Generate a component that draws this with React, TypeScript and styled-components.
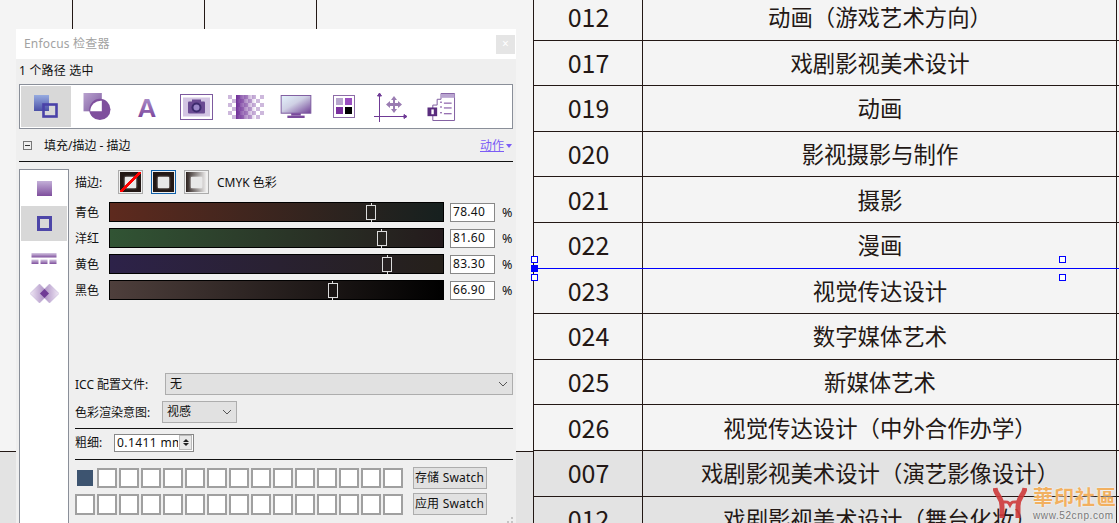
import React, { FC } from 'react';
import styled, { createGlobalStyle } from 'styled-components';

const INK = '#231815';
const UI_FONT = '"Noto Sans", "Noto Sans CJK SC", sans-serif';

const GlobalStyle = createGlobalStyle`
    html, body {
        margin: 0;
        padding: 0;
        background: #f4f4f4;
    }
    * {
        box-sizing: border-box;
    }
`;

const Page = styled.div`
    position: relative;
    display: grid;
    grid-template-columns: 533px 1fr;
    grid-template-rows: 523px;
    width: 1119px;
    height: 523px;
    overflow: hidden;
    background: #f4f4f4;
    color: ${INK};
`;

const DocLeft = styled.div`
    display: flex;
    flex-direction: column;
    justify-content: space-between;
`;

const Ticks = styled.div`
    display: flex;
    height: 29px;
`;

const Tick = styled.div<{ $w: number }>`
    width: ${(p) => p.$w}px;
    border-right: 1px solid ${INK};
`;

const Band = styled.div`
    height: 72px;
    background: #e3e3e3;
    border-top: 1px solid ${INK};
`;

const Table = styled.div`
    margin-top: -5px;
    font-family: 'Noto Sans CJK SC', sans-serif;
`;

const Row = styled.div`
    display: grid;
    grid-template-columns: 109px 474px 1fr;
    height: 45.6px;
    border-bottom: 1px solid ${INK};
`;

const Cell = styled.div<{ $shaded?: boolean; $size: number }>`
    display: flex;
    align-items: center;
    justify-content: center;
    padding: 0 0 2px 1px;
    border-left: 1px solid ${INK};
    background: ${(p) => (p.$shaded ? '#e3e3e3' : 'transparent')};
    font-size: ${(p) => p.$size}px;
    white-space: nowrap;
`;

const Stub = styled.div`
    border-left: 1px solid ${INK};
`;

const Guide = styled.div`
    position: absolute;
    left: 533px;
    right: 0;
    top: 268px;
    height: 1px;
    background: #0000ff;
`;

const Handle = styled.div<{ $x: number; $y: number; $solid?: boolean }>`
    position: absolute;
    left: ${(p) => p.$x}px;
    top: ${(p) => p.$y}px;
    width: 7px;
    height: 7px;
    border: 1px solid #0000ff;
    background: ${(p) => (p.$solid ? '#0000ff' : '#ffffff')};
`;

const Mark = styled.div`
    position: absolute;
    left: 993px;
    top: 486px;
    display: flex;
    gap: 6px;
`;

const MarkText = styled.div`
    display: flex;
    flex-direction: column;
`;

const MarkTitle = styled.div`
    font-family: 'Noto Sans CJK TC', sans-serif;
    font-weight: 700;
    font-size: 20px;
    line-height: 22px;
    letter-spacing: 1px;
    color: #f2b060;
    text-shadow: 0 0 2px #fff;
    white-space: nowrap;
`;

const MarkUrl = styled.div`
    font-family: 'Liberation Sans', sans-serif;
    font-size: 10px;
    line-height: 12px;
    letter-spacing: 0.6px;
    margin-top: 2px;
    color: #777;
    text-shadow: 0 0 2px #fff;
`;

const Panel = styled.div`
    position: absolute;
    left: 16px;
    top: 29px;
    width: 500px;
    height: 494px;
    display: flex;
    flex-direction: column;
    background: #efefef;
    font-family: ${UI_FONT};
    font-size: 12px;
    line-height: 16px;
    color: #111;
`;

const TitleBar = styled.div`
    display: flex;
    align-items: center;
    justify-content: space-between;
    height: 30px;
    padding: 0 1px 0 8px;
    background: #fff;
    color: #a2a2a2;
    font-size: 12px;
    letter-spacing: 0.2px;
`;

const CloseBtn = styled.div`
    display: flex;
    align-items: center;
    justify-content: center;
    width: 19px;
    height: 19px;
    background: #e5e5e5;
    color: #fff;
    font-size: 12px;
`;

const Status = styled.div`
    display: flex;
    align-items: center;
    height: 25px;
    padding: 0 0 1px 3px;
    letter-spacing: 0.2px;
`;

const Toolbar = styled.div`
    display: flex;
    align-items: center;
    height: 45px;
    margin: 0 3px;
    padding: 1px;
    border: 1px solid #8a8f99;
    background: #fff;
`;

const ToolSlot = styled.div<{ $w: number; $active?: boolean }>`
    display: flex;
    align-items: center;
    justify-content: center;
    flex: none;
    width: ${(p) => p.$w}px;
    height: 41px;
    background: ${(p) => (p.$active ? '#d8d8d8' : 'transparent')};
`;

const SectionHead = styled.div`
    display: flex;
    align-items: center;
    height: 33px;
    margin: 0 3px;
    padding: 0 1px 0 4px;
    border-bottom: 1px solid #111;
`;

const Collapse = styled.div`
    position: relative;
    width: 9px;
    height: 9px;
    margin-right: 12px;
    border: 1px solid #777;
    &::after {
        content: '';
        position: absolute;
        left: 1px;
        right: 1px;
        top: 3px;
        height: 1px;
        background: #333;
    }
`;

const SectionTitle = styled.div`
    flex: 1;
    padding-top: 1px;
`;

const ActionLink = styled.div`
    display: flex;
    align-items: center;
    gap: 2px;
    padding-top: 1px;
    color: #7b5cf5;
    text-decoration: underline;
    &::after {
        content: '';
        border-left: 3.5px solid transparent;
        border-right: 3.5px solid transparent;
        border-top: 4px solid #7b5cf5;
    }
`;

const Main = styled.div`
    display: flex;
    flex: 1;
    min-height: 0;
    margin: 7px 3px 0;
    gap: 6px;
`;

const Sidebar = styled.div`
    display: flex;
    flex-direction: column;
    width: 50px;
    padding: 0.5px 1px 0;
    border: 1px solid #8a8f99;
    border-bottom: none;
    background: #fff;
`;

const SideTile = styled.div<{ $active?: boolean }>`
    display: flex;
    align-items: center;
    justify-content: center;
    height: 35px;
    background: ${(p) => (p.$active ? '#d8d8d8' : 'transparent')};
`;

const Content = styled.div`
    display: flex;
    flex-direction: column;
    flex: 1;
    padding-top: 1px;
`;

const StrokeRow = styled.div`
    display: flex;
    align-items: center;
    height: 24px;
    margin-bottom: 7px;
`;

const StrokeLabel = styled.div`
    width: 43px;
    padding-top: 1px;
`;

const StrokeCaption = styled.div`
    padding-top: 1px;
`;

const StrokeSwatch = styled.div<{ $selected?: boolean; $kind: 'none' | 'solid' | 'fade' }>`
    display: flex;
    align-items: center;
    justify-content: center;
    width: 25px;
    height: 24px;
    margin-right: 8px;
    border: 1px solid ${(p) => (p.$selected ? '#0f5fa8' : '#ababab')};
    padding: 1px;
    background-clip: content-box;
    background-color: ${INK};
    background-image: ${(p) =>
        p.$kind === 'fade' ? `linear-gradient(to right, ${INK}, #fff)` : 'none'};
    position: relative;
    &::before {
        content: '';
        width: 11px;
        height: 11px;
        background: #e8e8e8;
        box-shadow: 0 0 2px #fff;
    }
    &::after {
        content: '';
        display: ${(p) => (p.$kind === 'none' ? 'block' : 'none')};
        position: absolute;
        inset: 1px;
        background: linear-gradient(
            to bottom right,
            transparent 45%,
            #ff0000 45%,
            #ff0000 55%,
            transparent 55%
        );
    }
`;

const SliderRow = styled.div`
    display: grid;
    grid-template-columns: 34px 335px 45px 1fr;
    align-items: center;
    height: 20px;
    margin-bottom: 6px;
`;

const SliderLabel = styled.div`
    padding-top: 1px;
`;

const Track = styled.div<{ $from: string; $to: string }>`
    position: relative;
    height: 20px;
    border: 1px solid #000;
    background: linear-gradient(to right, ${(p) => p.$from}, ${(p) => p.$to});
`;

const Thumb = styled.div<{ $pos: number }>`
    position: absolute;
    left: ${(p) => p.$pos}%;
    top: 1.5px;
    width: 10px;
    height: 15px;
    margin-left: -5px;
    border: 1px solid #dcdcdc;
    &::before,
    &::after {
        content: '';
        position: absolute;
        left: 3.5px;
        width: 1px;
        height: 2px;
        background: #dcdcdc;
    }
    &::before {
        top: -3px;
    }
    &::after {
        bottom: -3px;
    }
`;

const ValueBox = styled.div`
    grid-column: 3;
    height: 19px;
    margin-left: 6px;
    width: 45px;
    padding-left: 2px;
    border: 1px solid #888;
    background: #fff;
    line-height: 16px;
    letter-spacing: 0.3px;
`;

const Percent = styled.div`
    padding: 2px 0 0 13px;
    font-size: 12.5px;
    line-height: 20px;
    white-space: nowrap;
`;

const FormRow = styled.div<{ $top: number }>`
    display: flex;
    align-items: center;
    gap: 3px;
    margin-top: ${(p) => p.$top}px;
`;

const FormLabel = styled.div<{ $w: number }>`
    flex: none;
    width: ${(p) => p.$w}px;
    padding-top: 1px;
    white-space: nowrap;
`;

const SelectBox = styled.div<{ $w: number }>`
    display: flex;
    align-items: center;
    justify-content: space-between;
    width: ${(p) => p.$w}px;
    height: 22px;
    padding: 0 4px;
    border: 1px solid #adadad;
    background: #e1e1e1;
`;

const Divider = styled.div<{ $top: number }>`
    height: 1px;
    margin-top: ${(p) => p.$top}px;
    background: #111;
`;

const SpinInput = styled.div`
    display: flex;
    align-items: center;
    justify-content: space-between;
    width: 80px;
    height: 18px;
    padding: 0 1px 0 2px;
    border: 1px solid #888;
    background: #fff;
    overflow: hidden;
    letter-spacing: 0.4px;
`;

const SpinValue = styled.div`
    width: 61px;
    overflow: hidden;
    white-space: nowrap;
`;

const SpinButtons = styled.div`
    display: flex;
    flex-direction: column;
    width: 13px;
    height: 15px;
    background: #e8e8e8;
    border: 1px solid #bbb;
    gap: 1px;
    align-items: center;
    justify-content: center;
`;

const SpinArrow = styled.div<{ $down?: boolean }>`
    border-left: 3px solid transparent;
    border-right: 3px solid transparent;
    ${(p) => (p.$down ? 'border-top: 3px solid #222;' : 'border-bottom: 3px solid #222;')}
`;

const SwatchArea = styled.div`
    display: flex;
    gap: 9.5px;
    margin-top: 7.5px;
`;

const SwatchGrid = styled.div`
    display: grid;
    grid-template-columns: repeat(15, 20px);
    grid-auto-rows: 20.5px;
    column-gap: 2px;
    row-gap: 6px;
    padding-top: 0.5px;
`;

const SwatchCell = styled.div<{ $filled?: boolean }>`
    border: 2px solid ${(p) => (p.$filled ? 'transparent' : '#a0a0a0')};
    background: ${(p) => (p.$filled ? '#3d5470' : '#fff')};
    background-clip: padding-box;
`;

const SwatchButtons = styled.div`
    display: flex;
    flex-direction: column;
    gap: 4px;
`;

const SwatchButton = styled.div`
    display: flex;
    align-items: center;
    justify-content: center;
    width: 74px;
    height: 22px;
    border: 1px solid #adadad;
    background: #e1e1e1;
    letter-spacing: 0.2px;
    white-space: nowrap;
`;

const Grip = styled.div`
    position: absolute;
    right: 3px;
    bottom: 0;
    width: 2px;
    height: 2px;
    background: #c4c4c4;
    box-shadow: -4px 0 #c4c4c4, 0 -4px #c4c4c4;
`;

const Chevron: FC = () => (
    <svg width="10" height="6" viewBox="0 0 10 6" fill="none" stroke="#555" strokeWidth="1">
        <path d="M1 1l4 4 4-4" />
    </svg>
);

const FillStrokeIcon: FC = () => (
    <svg width="24" height="23" viewBox="0 0 24 23">
        <defs>
            <linearGradient id="fs" x1="0" y1="0" x2="0" y2="1">
                <stop offset="0" stopColor="#96abe0" />
                <stop offset="1" stopColor="#4a4fa6" />
            </linearGradient>
        </defs>
        <rect x="0" y="0" width="15" height="16" fill="url(#fs)" />
        <rect x="9.5" y="9.5" width="13" height="12" fill="none" stroke="#4a42a8" strokeWidth="2.6" />
    </svg>
);

const ShapesIcon: FC = () => (
    <svg width="28" height="27" viewBox="0 0 28 28">
        <defs>
            <linearGradient id="sq" x1="0" y1="0" x2="1" y2="1">
                <stop offset="0" stopColor="#b9a2cf" />
                <stop offset="1" stopColor="#7d5a9f" />
            </linearGradient>
        </defs>
        <rect x="0" y="0" width="19" height="19" fill="url(#sq)" />
        <circle cx="17" cy="17" r="11" fill="#7f4f9d" />
        <path d="M7 19a11 11 0 0 1 12-11v11z" fill="#fff" />
    </svg>
);

const LetterIcon: FC = () => (
    <svg width="22" height="32" viewBox="0 0 22 32">
        <defs>
            <linearGradient id="lt" x1="0" y1="0" x2="0" y2="1">
                <stop offset="0.2" stopColor="#a98cc6" />
                <stop offset="0.8" stopColor="#7f4a9f" />
            </linearGradient>
        </defs>
        <text x="11" y="25.5" textAnchor="middle" fontFamily="Liberation Sans" fontWeight="700" fontSize="26" fill="url(#lt)">
            A
        </text>
    </svg>
);

const CameraIcon: FC = () => (
    <svg width="33" height="26" viewBox="0 0 33 26">
        <rect x="0.5" y="0.5" width="32" height="25" fill="#fff" stroke="#7d5a9f" />
        <rect x="3" y="3.500" width="27" height="19" fill="#d3c5e3" />
        <rect x="8" y="7.500" width="17" height="12" rx="1" fill="#6a4a92" />
        <rect x="12" y="5.500" width="9" height="3" fill="#6a4a92" />
        <circle cx="16.5" cy="13.500" r="5" fill="#3d2a6e" />
        <circle cx="16.5" cy="13.500" r="3" fill="#9a86c8" />
    </svg>
);

const CheckerIcon: FC = () => {
    const cells = [];
    for (let y = 0; y < 6; y++) {
        for (let x = 0; x < 9; x++) {
            if ((x + y) % 2 === 0) cells.push(<rect key={`${x}-${y}`} x={x * 4} y={y * 4} width="4" height="4" fill="#cdb8dc" />);
        }
    }
    return (
        <svg width="36" height="24" viewBox="0 0 36 24">
            <defs>
                <linearGradient id="ck" x1="0" y1="0" x2="1" y2="0">
                    <stop offset="0" stopColor="#6f2f98" />
                    <stop offset="1" stopColor="#6f2f98" stopOpacity="0" />
                </linearGradient>
            </defs>
            {cells}
            <rect x="8" y="0" width="20" height="24" fill="url(#ck)" />
        </svg>
    );
};

const MonitorIcon: FC = () => (
    <svg width="32" height="23" viewBox="0 0 32 24">
        <defs>
            <linearGradient id="mn" x1="0" y1="0" x2="1" y2="1">
                <stop offset="0" stopColor="#e4f4fc" />
                <stop offset="0.45" stopColor="#cfd0e4" />
                <stop offset="1" stopColor="#6f3f95" />
            </linearGradient>
        </defs>
        <rect x="0.5" y="0.5" width="31" height="18.5" fill="url(#mn)" stroke="#7d5a9f" />
        <rect x="11" y="19" width="10" height="2.5" fill="#7a4a9c" />
        <rect x="7" y="21.5" width="18" height="2.5" fill="#7a4a9c" />
    </svg>
);

const GridIcon: FC = () => (
    <svg width="22" height="23" viewBox="0 0 22 23">
        <rect x="0.5" y="0.5" width="21" height="22" fill="#fff" stroke="#8d6ba8" />
        <rect x="3" y="3" width="7" height="7" fill="#b7a6cd" />
        <rect x="12" y="3" width="7" height="7" fill="#9a4fc0" />
        <rect x="3" y="12" width="7" height="7" fill="#7a2f9e" />
        <rect x="12" y="12" width="7" height="7" fill="#000" />
    </svg>
);

const AxesIcon: FC = () => (
    <svg width="34" height="30" viewBox="0 0 34 30">
        <g stroke="#6f3a95" strokeWidth="1" fill="#6f3a95">
            <path d="M5.5 2v28" />
            <path d="M0 24.5h32" />
            <path d="M3.5 4l2-3 2 3z" />
            <path d="M30 22.5l3 2-3 2z" />
        </g>
        <path d="M20 4l3 4h-2v3h3V9l4 3.500-4 3.500v-2h-3v3h2l-3 4-3-4h2v-3h-3v2l-4-3.500 4-3.500v2h3V8h-2z" fill="#9a7cb2" />
    </svg>
);

const InfoIcon: FC = () => (
    <svg width="29" height="28" viewBox="0 0 29 29">
        <path d="M5.500 12.500h4.500v-6h4v-6h14v28h-22.500z" fill="#fff" stroke="#7d5a9f" />
        <rect x="14" y="1" width="14" height="4" fill="#b9a4d0" />
        <g stroke="#6f3a95" strokeWidth="1">
            <path d="M17 10.500h8M17 15.500h8M17 21.500h8M13 9.500h2M13 14.500h2M13 20.500h2" />
        </g>
        <rect x="0" y="15" width="10" height="9" fill="#5a2d7e" />
        <rect x="4" y="17" width="2.500" height="5" fill="#fff" />
    </svg>
);

const SideFillIcon: FC = () => (
    <svg width="15" height="15" viewBox="0 0 15 15">
        <defs>
            <linearGradient id="sf" x1="0" y1="0" x2="0" y2="1">
                <stop offset="0" stopColor="#c3afd8" />
                <stop offset="1" stopColor="#7f4f9d" />
            </linearGradient>
        </defs>
        <rect width="15" height="15" fill="url(#sf)" />
    </svg>
);

const SideStrokeIcon: FC = () => (
    <svg width="15" height="15" viewBox="0 0 15 15">
        <rect x="1.500" y="1.500" width="12" height="12" fill="none" stroke="#4d46a8" strokeWidth="3" />
    </svg>
);

const SideDashIcon: FC = () => (
    <svg width="26" height="11" viewBox="0 0 26 11">
        <defs>
            <linearGradient id="sd" x1="0" y1="0" x2="0" y2="1">
                <stop offset="0" stopColor="#d5c8e2" />
                <stop offset="1" stopColor="#7f4f9d" />
            </linearGradient>
        </defs>
        <rect x="0.500" y="0" width="25" height="4.500" fill="url(#sd)" />
        <rect x="0.500" y="6.500" width="7" height="4.500" fill="url(#sd)" />
        <rect x="9.500" y="6.500" width="7" height="4.500" fill="url(#sd)" />
        <rect x="18.500" y="6.500" width="7" height="4.500" fill="url(#sd)" />
    </svg>
);

const SideDiamondIcon: FC = () => (
    <svg width="29" height="19" viewBox="0 0 29 19">
        <defs>
            <linearGradient id="dl" x1="0" y1="0" x2="1" y2="0">
                <stop offset="0" stopColor="#f0e8f5" />
                <stop offset="1" stopColor="#9a78b6" />
            </linearGradient>
            <linearGradient id="dr" x1="1" y1="0" x2="0" y2="0">
                <stop offset="0" stopColor="#f0e8f5" />
                <stop offset="1" stopColor="#9a78b6" />
            </linearGradient>
        </defs>
        <path d="M0 9.500L9.500 0l9.500 9.500-9.500 9.500z" fill="url(#dl)" stroke="#b9a4d0" strokeWidth="0.5" />
        <path d="M10 9.500L19.500 0l9.500 9.500-9.500 9.500z" fill="url(#dr)" stroke="#b9a4d0" strokeWidth="0.5" />
        <path d="M14.500 5l4.500 4.500-4.500 4.500-4.500-4.500z" fill="#6f3a95" />
    </svg>
);

const WatermarkLogo: FC = () => (
    <svg width="34" height="33" viewBox="0 0 34 33" fill="none" stroke="#cf3a3a" opacity="0.9">
        <path d="M2 2c1 7 7 9 7 18v12" strokeWidth="5" />
        <path d="M32 2c-1 7-7 9-7 18v12" strokeWidth="5" />
        <path d="M9 16c4 0 6-1 8 3 2-4 4-3 8-3" strokeWidth="3" />
    </svg>
);

const tools = [
    { w: 50, icon: <FillStrokeIcon />, active: true },
    { w: 51, icon: <ShapesIcon /> },
    { w: 49, icon: <LetterIcon /> },
    { w: 51, icon: <CameraIcon /> },
    { w: 48, icon: <CheckerIcon /> },
    { w: 52, icon: <MonitorIcon /> },
    { w: 44, icon: <GridIcon /> },
    { w: 50, icon: <AxesIcon /> },
    { w: 51, icon: <InfoIcon /> },
];

const sliders = [
    { label: '青色', value: 78.4, from: '#5e2a1e', to: '#16201f' },
    { label: '洋红', value: 81.6, from: '#315434', to: '#241a1c' },
    { label: '黄色', value: 83.3, from: '#2d2249', to: '#25201a' },
    { label: '黑色', value: 66.9, from: '#4e3f3c', to: '#000000' },
];

const rows = [
    { code: '012', name: '动画（游戏艺术方向）' },
    { code: '017', name: '戏剧影视美术设计' },
    { code: '019', name: '动画' },
    { code: '020', name: '影视摄影与制作' },
    { code: '021', name: '摄影' },
    { code: '022', name: '漫画' },
    { code: '023', name: '视觉传达设计' },
    { code: '024', name: '数字媒体艺术' },
    { code: '025', name: '新媒体艺术' },
    { code: '026', name: '视觉传达设计（中外合作办学）' },
    { code: '007', name: '戏剧影视美术设计（演艺影像设计）', shaded: true },
    { code: '012', name: '戏剧影视美术设计（舞台化妆）', shaded: true },
];

const App: FC = () => {
    return (
        <Page>
            <GlobalStyle />
            <DocLeft>
                <Ticks>
                    <Tick $w={73} />
                    <Tick $w={132} />
                    <Tick $w={112} />
                </Ticks>
                <Band />
            </DocLeft>
            <Table>
                {rows.map((r, i) => (
                    <Row key={i}>
                        <Cell $shaded={r.shaded} $size={25}>
                            {r.code}
                        </Cell>
                        <Cell $shaded={r.shaded} $size={22.4}>
                            {r.name}
                        </Cell>
                        <Stub />
                    </Row>
                ))}
            </Table>

            <Guide />
            <Handle $x={531} $y={256} />
            <Handle $x={531} $y={265} $solid />
            <Handle $x={531} $y={274} />
            <Handle $x={1059} $y={256} />
            <Handle $x={1059} $y={274} />

            <Mark>
                <WatermarkLogo />
                <MarkText>
                    <MarkTitle>華印社區</MarkTitle>
                    <MarkUrl>www.52cnp.com</MarkUrl>
                </MarkText>
            </Mark>

            <Panel>
                <TitleBar>
                    Enfocus 检查器
                    <CloseBtn>×</CloseBtn>
                </TitleBar>
                <Status>1 个路径 选中</Status>
                <Toolbar>
                    {tools.map((t, i) => (
                        <ToolSlot key={i} $w={t.w} $active={t.active}>
                            {t.icon}
                        </ToolSlot>
                    ))}
                </Toolbar>
                <SectionHead>
                    <Collapse />
                    <SectionTitle>填充/描边 - 描边</SectionTitle>
                    <ActionLink>动作</ActionLink>
                </SectionHead>
                <Main>
                    <Sidebar>
                        <SideTile>
                            <SideFillIcon />
                        </SideTile>
                        <SideTile $active>
                            <SideStrokeIcon />
                        </SideTile>
                        <SideTile>
                            <SideDashIcon />
                        </SideTile>
                        <SideTile>
                            <SideDiamondIcon />
                        </SideTile>
                    </Sidebar>
                    <Content>
                        <StrokeRow>
                            <StrokeLabel>描边:</StrokeLabel>
                            <StrokeSwatch $kind="none" />
                            <StrokeSwatch $kind="solid" $selected />
                            <StrokeSwatch $kind="fade" />
                            <StrokeCaption>CMYK 色彩</StrokeCaption>
                        </StrokeRow>
                        {sliders.map((s) => (
                            <SliderRow key={s.label}>
                                <SliderLabel>{s.label}</SliderLabel>
                                <Track $from={s.from} $to={s.to}>
                                    <Thumb $pos={s.value} />
                                </Track>
                                <ValueBox>{s.value.toFixed(2)}</ValueBox>
                                <Percent>%</Percent>
                            </SliderRow>
                        ))}
                        <FormRow $top={68.3}>
                            <FormLabel $w={87}>ICC 配置文件:</FormLabel>
                            <SelectBox $w={348}>
                                无
                                <Chevron />
                            </SelectBox>
                        </FormRow>
                        <FormRow $top={6}>
                            <FormLabel $w={84}>色彩渲染意图:</FormLabel>
                            <SelectBox $w={75}>
                                视感
                                <Chevron />
                            </SelectBox>
                        </FormRow>
                        <Divider $top={4.3} />
                        <FormRow $top={5}>
                            <FormLabel $w={36}>粗细:</FormLabel>
                            <SpinInput>
                                <SpinValue>0.1411 mm</SpinValue>
                                <SpinButtons>
                                    <SpinArrow />
                                    <SpinArrow $down />
                                </SpinButtons>
                            </SpinInput>
                        </FormRow>
                        <Divider $top={7.3} />
                        <SwatchArea>
                            <SwatchGrid>
                                {Array.from({ length: 30 }, (_, i) => (
                                    <SwatchCell key={i} $filled={i === 0} />
                                ))}
                            </SwatchGrid>
                            <SwatchButtons>
                                <SwatchButton>存储 Swatch</SwatchButton>
                                <SwatchButton>应用 Swatch</SwatchButton>
                            </SwatchButtons>
                        </SwatchArea>
                    </Content>
                </Main>
                <Grip />
            </Panel>
        </Page>
    );
};

export default App;
